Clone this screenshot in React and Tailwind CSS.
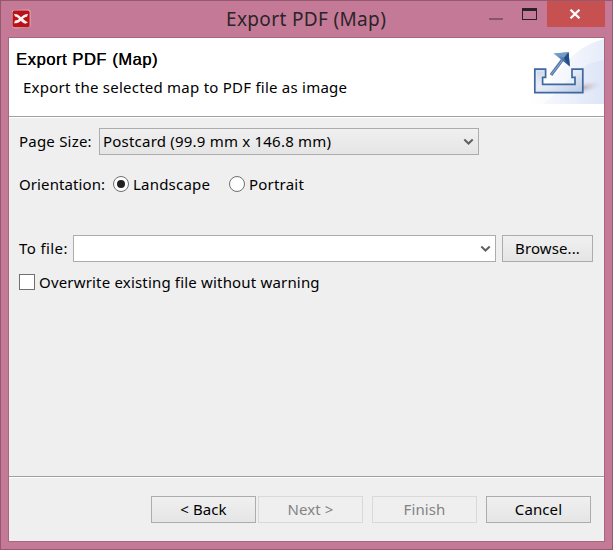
import React from "react";

function AppLogo() {
  return (
    <svg width="20" height="20" viewBox="0 0 20 20" className="block">
      <path d="M1 2L3 1L18 .5L19.5 2V17L17.5 18.5L4 19.5L1.5 18Z" fill="#e0b3b4" />
      <rect x="1.6" y="1.6" width="17" height="16.6" rx="2" fill="#b9121b" />
      <path d="M3 5C7 4.8 8.6 6.9 10 8.3C12 6.5 13.5 5.2 17 5L16 7.8C14 8 13 8.8 12 9.8C13.5 11.5 14.8 12.3 17 13.2L14.5 14.8C12 14.3 11 13.2 9.8 11.8C8 13.8 6.5 14.3 3 14.3L4 11.6C6 11.5 7 10.8 8 9.8C6.6 8.3 5.8 7.5 4 7.4Z" fill="#fbf1ef" />
    </svg>
  );
}

function ExportBanner() {
  return (
    <svg width="75" height="66" viewBox="0 0 75 66" className="block">
      <defs>
        <linearGradient id="wash" x1="0" y1="0" x2="1" y2="0">
          <stop offset="0" stopColor="#ffffff" />
          <stop offset="0.5" stopColor="#f5f7fd" />
          <stop offset="1" stopColor="#e6ecf9" />
        </linearGradient>
        <linearGradient id="swoosh" x1="0" y1="0" x2="1" y2="0">
          <stop offset="0" stopColor="#f5f7fd" />
          <stop offset="1" stopColor="#d9e2f6" />
        </linearGradient>
        <linearGradient id="tray" x1="0" y1="0" x2="1" y2="1">
          <stop offset="0" stopColor="#c3d1e7" />
          <stop offset="0.4" stopColor="#eceffa" />
          <stop offset="1" stopColor="#b9cae4" />
        </linearGradient>
        <linearGradient id="tip" x1="0" y1="0" x2="1" y2="0.4">
          <stop offset="0" stopColor="#9bbde0" />
          <stop offset="1" stopColor="#2a5592" />
        </linearGradient>
        <radialGradient id="shade">
          <stop offset="0" stopColor="#b9a8b4" stopOpacity="0.9" />
          <stop offset="1" stopColor="#d9d5e4" stopOpacity="0" />
        </radialGradient>
      </defs>
      <path d="M0 66V62C24 53 31 12 75 1V66Z" fill="url(#wash)" />
      <path d="M14 66C37 51 43 26 75 22V66Z" fill="url(#swoosh)" opacity="0.75" />
      <ellipse cx="54" cy="50" rx="19" ry="6" transform="rotate(-13 54 50)" fill="url(#shade)" />
      <path d="M5.8 31.1H16.6V39.3H13.6V46.4H46V39.3H43V31.1H53.8V54.6H5.8Z" fill="url(#tray)" stroke="#3e689f" strokeWidth="1.7" />
      <path d="M7.6 52.6V32.9H15.2" fill="none" stroke="#e3eaf5" strokeWidth="1" />
      <path d="M22 37L34 21" stroke="#557bad" strokeWidth="3.2" />
      <path d="M22.3 36.5L34 21.5" stroke="#91abc9" strokeWidth="1" />
      <path d="M24.5 15.4L39.6 14.2L40.8 28.5Z" fill="url(#tip)" />
      <path d="M24.5 15.4L39.6 14.2L35 19.5Z" fill="#729bc8" />
      <path d="M39.6 14.2L40.8 28.5L35 20Z" fill="#214e87" />
    </svg>
  );
}

function Chevron() {
  return (
    <svg width="11" height="8" viewBox="0 0 11 8" className="block">
      <path d="M1.3 1.5L5.5 5.5L9.7 1.5" fill="none" stroke="#606060" strokeWidth="2" />
    </svg>
  );
}

function Button({ children, className = "w-[105px]", disabled }) {
  const look = disabled
    ? "border-[#d9d9d9] bg-[#efefef] text-[#838383]"
    : "border-[#acacac] bg-linear-to-b from-[#f0f0f0] to-[#e5e5e5] text-black";
  return (
    <button disabled={disabled} className={`flex h-[27px] shrink-0 items-center justify-center border pb-0.5 tracking-[0.1px] ${look} ${className}`}>
      {children}
    </button>
  );
}

function Radio({ checked }) {
  return (
    <span className="flex size-4 shrink-0 items-center justify-center rounded-full border border-[#707070] bg-white">
      {checked && <span className="size-2 rounded-full bg-[#212121]" />}
    </span>
  );
}

export default function App() {
  return (
    <div className="flex h-[550px] w-[613px] flex-col overflow-hidden border border-[#96586f] bg-[#c47a96] font-['Noto_Sans',sans-serif] text-[15px] leading-5 tracking-[0.21px] whitespace-nowrap text-black">
      <div className="flex h-9 shrink-0 items-start">
        <div className="mt-2 ml-2.5 w-5"><AppLogo /></div>
        <h1 className="mt-1 ml-[195px] w-[257px] text-[19px] leading-7 font-normal tracking-[0.35px] text-[#2b2429]">Export PDF (Map)</h1>
        <div className="mt-[17px] ml-[6px] h-0.5 w-3.5 bg-[#84566a]" />
        <div className="mt-[7px] ml-[19px] h-3 w-[15px] border border-t-[3px] border-[#272225]" />
        <button className="ml-[10px] flex h-[26px] w-[58px] items-center justify-center bg-[#c75050] pr-0.5">
          <svg width="12" height="10" viewBox="0 0 12 10"><path d="M1.5 .7L10.5 9.3M10.5 .7L1.5 9.3" stroke="white" strokeWidth="2.2" /></svg>
        </button>
      </div>
      <main className="mx-[7px] mb-[7px] flex grow flex-col border border-[#a9667f] bg-[#efefef]">
        <header className="flex h-[79px] shrink-0 justify-between border-b border-[#a0a0a0] bg-white">
          <div className="pt-[11px] pl-[7px]">
            <h2 className="font-['Liberation_Sans',sans-serif] text-[16.5px] leading-5 font-normal tracking-[0.57px] [text-shadow:0.3px_0_0_#000]">Export PDF (Map)</h2>
            <p className="mt-2 ml-[7px] tracking-[0.24px]">Export the selected map to PDF file as image</p>
          </div>
          <ExportBanner />
        </header>
        <section className="h-[359px] shrink-0 border-t border-white px-2.5 pt-2.5">
          <div className="flex h-[27px] items-center">
            <span className="w-20 pb-0.5">Page Size:</span>
            <div className="flex h-[27px] w-[380px] items-center justify-between border border-[#acacac] bg-linear-to-b from-[#f0f0f0] to-[#e5e5e5] pr-[4px] pl-[3px]">
              <span className="pb-0.5">Postcard (99.9 mm x 146.8 mm)</span><Chevron />
            </div>
          </div>
          <div className="mt-[19px] flex h-5 items-center">
            <span className="w-[94px] tracking-[0.1px]">Orientation:</span>
            <Radio checked /><span className="ml-1 w-24">Landscape</span>
            <Radio /><span className="ml-1">Portrait</span>
          </div>
          <div className="mt-[41px] flex h-[27px] items-center">
            <span className="w-[54px] pb-0.5 tracking-[0.4px]">To file:</span>
            <div className="flex h-[27px] w-[423px] items-center justify-end border border-[#acacac] bg-white pr-[4px]"><Chevron /></div>
            <Button className="ml-1.5 w-[91px]">Browse...</Button>
          </div>
          <div className="mt-2.5 flex h-5 items-center">
            <span className="mr-1 size-4 shrink-0 border border-[#707070] bg-white" />
            <span className="tracking-[0.18px]">Overwrite existing file without warning</span>
          </div>
        </section>
        <footer className="flex grow border-t border-[#a0a0a0]">
          <div className="flex grow border-t border-white pt-[18px] pl-[142px]">
            <Button>&lt; Back</Button>
            <Button disabled className="ml-0.5 w-[105px]">Next &gt;</Button>
            <Button disabled className="ml-[9px] w-[105px]">Finish</Button>
            <Button className="ml-[9px] w-[105px]">Cancel</Button>
          </div>
        </footer>
      </main>
    </div>
  );
}
